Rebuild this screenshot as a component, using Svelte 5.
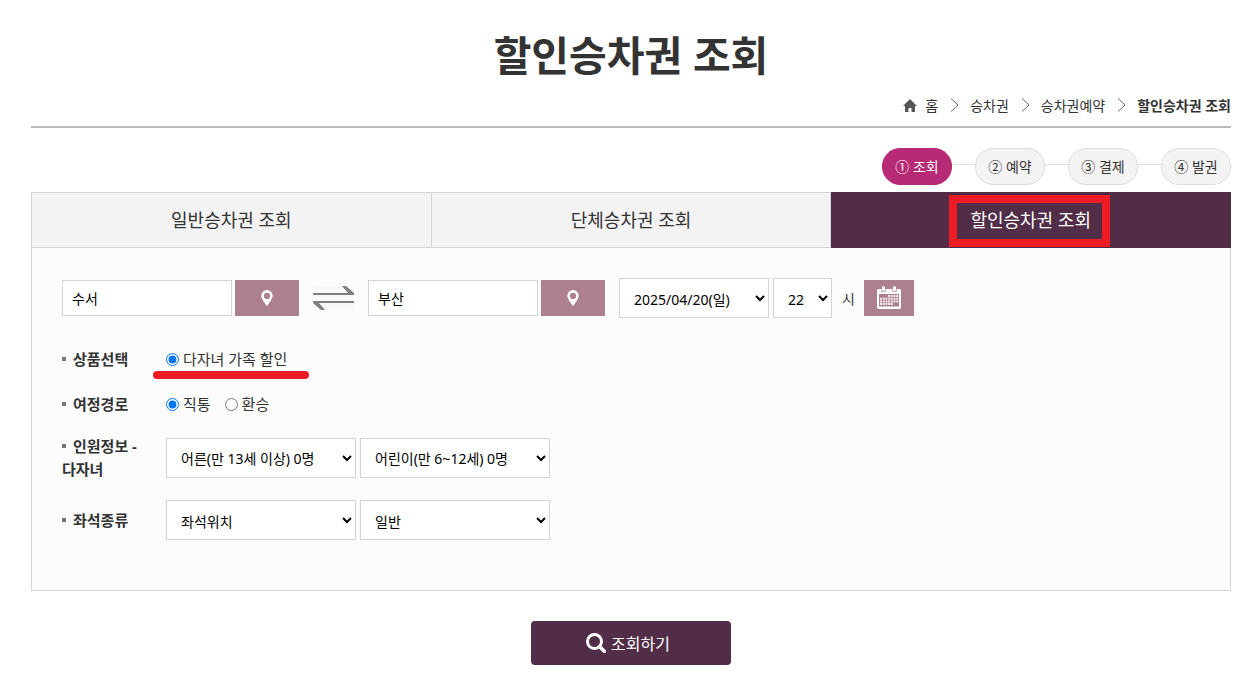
<script>
  const crumbs = ['홈', '승차권', '승차권예약', '할인승차권 조회'];
  const steps = ['① 조회', '② 예약', '③ 결제', '④ 발권'];
  const tabs = ['일반승차권 조회', '단체승차권 조회', '할인승차권 조회'];

  let activeTab = 2;
  let from = '수서';
  let to = '부산';
  let product = 'family';
  let route = 'direct';

  function swap() {
    [from, to] = [to, from];
  }
</script>

<main>
  <h1>할인승차권 조회</h1>

  <nav class="crumbs" aria-label="현재 위치">
    <svg class="home" width="14" height="13" viewBox="0 0 14 13" aria-hidden="true">
      <path d="M7 0 0 7h2v6h3.500V9h3v4H12V7h2z" fill="#555" />
    </svg>
    {#each crumbs as crumb, i}
      {#if i > 0}
        <svg class="sep" width="9" height="14" viewBox="0 0 9 14" aria-hidden="true">
          <path d="M1 .5 8 7 1 13.500" fill="none" stroke="#666" />
        </svg>
      {/if}
      <a href="#top" class:current={i === crumbs.length - 1}>{crumb}</a>
    {/each}
  </nav>

  <ol class="steps">
    {#each steps as step, i}
      <li class:on={i === 0}>{step}</li>
    {/each}
  </ol>

  <nav class="tabs" aria-label="승차권 종류">
    {#each tabs as tab, i}
      <a href="#tab" class:active={activeTab === i} on:click|preventDefault={() => activeTab = i}>
        {tab}
        {#if i === 2}<span class="box"></span>{/if}
      </a>
    {/each}
  </nav>

  <form on:submit|preventDefault>
    <div class="panel">
      <div class="trip">
        <div class="station">
          <input type="text" aria-label="출발역" bind:value={from}>
          <button type="button" class="pick" aria-label="출발역 선택">
            <svg width="12" height="17" viewBox="0 0 12 17" aria-hidden="true">
              <path fill-rule="evenodd" d="M6 0a5.700 5.700 0 0 0-5.700 5.700C.3 9 4 12.500 6 16.500 8 12.500 11.700 9 11.700 5.700A5.700 5.700 0 0 0 6 0zm0 2.800a3 3 0 1 1 0 6.200 3 3 0 0 1 0-6.200z" fill="#fff" />
            </svg>
          </button>
        </div>
        <button type="button" class="swap" aria-label="출발역 도착역 바꾸기" on:click={swap}>
          <svg width="41" height="24" viewBox="0 0 41 24" aria-hidden="true">
            <path fill="#f8f8f8" d="M0 0h41v24H0z" />
            <path fill="#808080" d="M0 7h35L29 0h4l8 7v2H0zM41 17H6l6 7H8L0 17v-2h41z" />
          </svg>
        </button>
        <div class="station">
          <input type="text" aria-label="도착역" bind:value={to}>
          <button type="button" class="pick" aria-label="도착역 선택">
            <svg width="12" height="17" viewBox="0 0 12 17" aria-hidden="true">
              <path fill-rule="evenodd" d="M6 0a5.700 5.700 0 0 0-5.700 5.700C.3 9 4 12.500 6 16.500 8 12.500 11.700 9 11.700 5.700A5.700 5.700 0 0 0 6 0zm0 2.800a3 3 0 1 1 0 6.200 3 3 0 0 1 0-6.200z" fill="#fff" />
            </svg>
          </button>
        </div>
        <div class="when">
          <select class="date" aria-label="출발일"><option>2025/04/20(일)</option></select>
          <select class="hour" id="hour"><option>22</option></select>
          <label for="hour">시</label>
          <button type="button" class="pick cal" aria-label="달력">
            <svg width="24" height="24" viewBox="0 0 24 24" aria-hidden="true">
              <path fill="#fff" fill-rule="evenodd" d="M1 3h4V1.500a1.500 1.500 0 0 1 3 0V3h8V1.500a1.500 1.500 0 0 1 3 0V3h4l1 1v18l-1 1H1l-1-1V4zM2 8v12.500h20V8z" />
              <path fill="none" stroke="#ac808f" stroke-width=".7" d="M4.700 3v2.500h3.600V3M15.700 3v2.500h3.600V3" />
              <path fill="none" stroke="#f3e9ec" stroke-width="2" stroke-dasharray="2 .7" d="M11 10h10.500M3 12.700h18.500M3 15.400h18.500M3 18.100h13" />
            </svg>
          </button>
        </div>
      </div>

      <div class="row" role="radiogroup" aria-labelledby="l-product">
        <span class="label" id="l-product">상품선택</span>
        <div class="radios">
          <label class="marked">
            <input type="radio" name="product" value="family" bind:group={product}>다자녀 가족 할인
            <span class="underline"></span>
          </label>
        </div>
      </div>

      <div class="row" role="radiogroup" aria-labelledby="l-route">
        <span class="label" id="l-route">여정경로</span>
        <div class="radios">
          <label><input type="radio" name="route" value="direct" bind:group={route}>직통</label>
          <label><input type="radio" name="route" value="transfer" bind:group={route}>환승</label>
        </div>
      </div>

      <div class="row">
        <label class="label" for="adult">인원정보 -<br>다자녀</label>
        <div class="selects">
          <select id="adult"><option>어른(만 13세 이상) 0명</option></select>
          <select aria-label="어린이"><option>어린이(만 6~12세) 0명</option></select>
        </div>
      </div>

      <div class="row">
        <label class="label" for="seat">좌석종류</label>
        <div class="selects low">
          <select id="seat"><option>좌석위치</option></select>
          <select aria-label="좌석 등급"><option>일반</option></select>
        </div>
      </div>
    </div>

    <button class="submit">
      <svg width="20" height="20" viewBox="0 0 20 20" aria-hidden="true">
        <circle cx="8.500" cy="8.500" r="7" fill="none" stroke="#fff" stroke-width="3" />
        <path d="m13.500 13.500 5 5" stroke="#fff" stroke-width="3.500" stroke-linecap="round" />
      </svg>
      조회하기
    </button>
  </form>
</main>

<style>
  :global(body) {
    background: #fff;
  }
  main {
    padding: 30px 16px 32px 31px;
    color: #333;
    font-family: "Noto Sans", "Noto Sans CJK KR", sans-serif;
    font-size: 14px;
  }
  main * {
    box-sizing: border-box;
  }
  input, select, button {
    margin: 0;
    font-family: inherit;
    font-size: 14px;
  }
  svg {
    display: block;
    flex: none;
  }
  a {
    color: inherit;
    text-decoration: none;
  }
  h1 {
    margin: 0;
    font-size: 41px;
    line-height: 50px;
    text-align: center;
  }

  .crumbs {
    display: flex;
    align-items: center;
    justify-content: flex-end;
    height: 48px;
    padding-top: 4px;
    border-bottom: 2px solid #bbb;
  }
  .home {
    margin-right: 8px;
  }
  .sep {
    margin: 0 11px 0 12px;
  }
  .current {
    font-weight: bold;
  }

  .steps {
    display: flex;
    justify-content: flex-end;
    gap: 23px;
    margin: 0;
    padding: 20px 0 7px;
    list-style: none;
  }
  .steps li {
    position: relative;
    width: 70px;
    border: 1px solid #ddd;
    border-radius: 18px;
    background: #f3f3f3;
    line-height: 35px;
    text-align: center;
  }
  .steps li.on {
    border-color: #b72a75;
    background: #b72a75;
    color: #fff;
  }
  /* line between two steps */
  .steps li + li::before {
    content: "";
    position: absolute;
    top: 15px;
    right: 100%;
    width: 24px;
    border-top: 1px solid #ddd;
  }

  .tabs {
    display: flex;
  }
  .tabs a {
    position: relative;
    flex: 1 1 0;
    border: 1px solid #d4d4d4;
    border-left: 0;
    background: #f3f3f3;
    font-size: 18px;
    line-height: 54px;
    text-align: center;
  }
  .tabs a:first-child {
    border-left: 1px solid #d4d4d4;
  }
  .tabs a.active {
    border-color: #522d48;
    background: #522d48;
    color: #fff;
  }
  .box {
    position: absolute;
    top: 2px;
    left: 50%;
    width: 161px;
    height: 52px;
    margin-left: -82px;
    border: 8px solid #ed1c24;
  }

  .panel {
    display: flex;
    flex-direction: column;
    gap: 22px;
    padding: 30px 30px 50px;
    border: 1px solid #d4d4d4;
    border-top: 0;
    background: #fcfcfc;
  }
  .trip {
    display: flex;
    align-items: center;
    gap: 14px;
    margin-bottom: 8px;
  }
  .station {
    display: flex;
    gap: 3px;
  }
  .when, .selects {
    display: flex;
    align-items: center;
    gap: 4px;
  }
  .station input {
    width: 170px;
    height: 36px;
    padding: 0 9px;
    border: 1px solid #d4d4d4;
    background: #fff;
  }
  .pick {
    display: flex;
    align-items: center;
    justify-content: center;
    width: 64px;
    height: 36px;
    padding: 0;
    border: 0;
    background: #ac808f;
  }
  .pick.cal {
    width: 50px;
  }
  .swap {
    padding: 0;
    border: 0;
    background: none;
  }
  .when label {
    margin: 0 5px 0 6px;
  }
  select {
    width: 190px;
    height: 40px;
    padding: 0 0 0 10px;
    border: 1px solid #d4d4d4;
    border-radius: 0;
    background: #fff;
    color: #000;
  }
  .when select, .low select {
    padding-top: 3px;
  }
  select.date {
    width: 150px;
  }
  select.hour {
    width: 59px;
  }

  .row {
    display: flex;
    align-items: center;
  }
  .label {
    width: 104px;
    font-size: 15px;
    font-weight: bold;
    line-height: 23px;
  }
  .label::before {
    content: "";
    display: inline-block;
    width: 4px;
    height: 4px;
    margin-right: 7px;
    background: #777;
    vertical-align: 4px;
  }
  .row:has(.selects) .label {
    margin: -3px 0;
  }
  .radios {
    display: flex;
    gap: 14px;
  }
  .radios label {
    position: relative;
    display: flex;
    align-items: center;
    gap: 4px;
    font-size: 15px;
    line-height: 23px;
  }
  .radios input {
    width: 13px;
    height: 13px;
  }
  .underline {
    position: absolute;
    top: 23px;
    left: -13px;
    right: -22px;
    height: 8px;
    border-radius: 4px;
    background: #ed1c24;
  }

  .submit {
    display: flex;
    align-items: center;
    justify-content: center;
    gap: 5px;
    width: 200px;
    height: 44px;
    margin: 30px auto 0;
    padding: 0 6px 0 0;
    border: 0;
    border-radius: 4px;
    background: #522d48;
    color: #fff;
    font-size: 16px;
  }
</style>
